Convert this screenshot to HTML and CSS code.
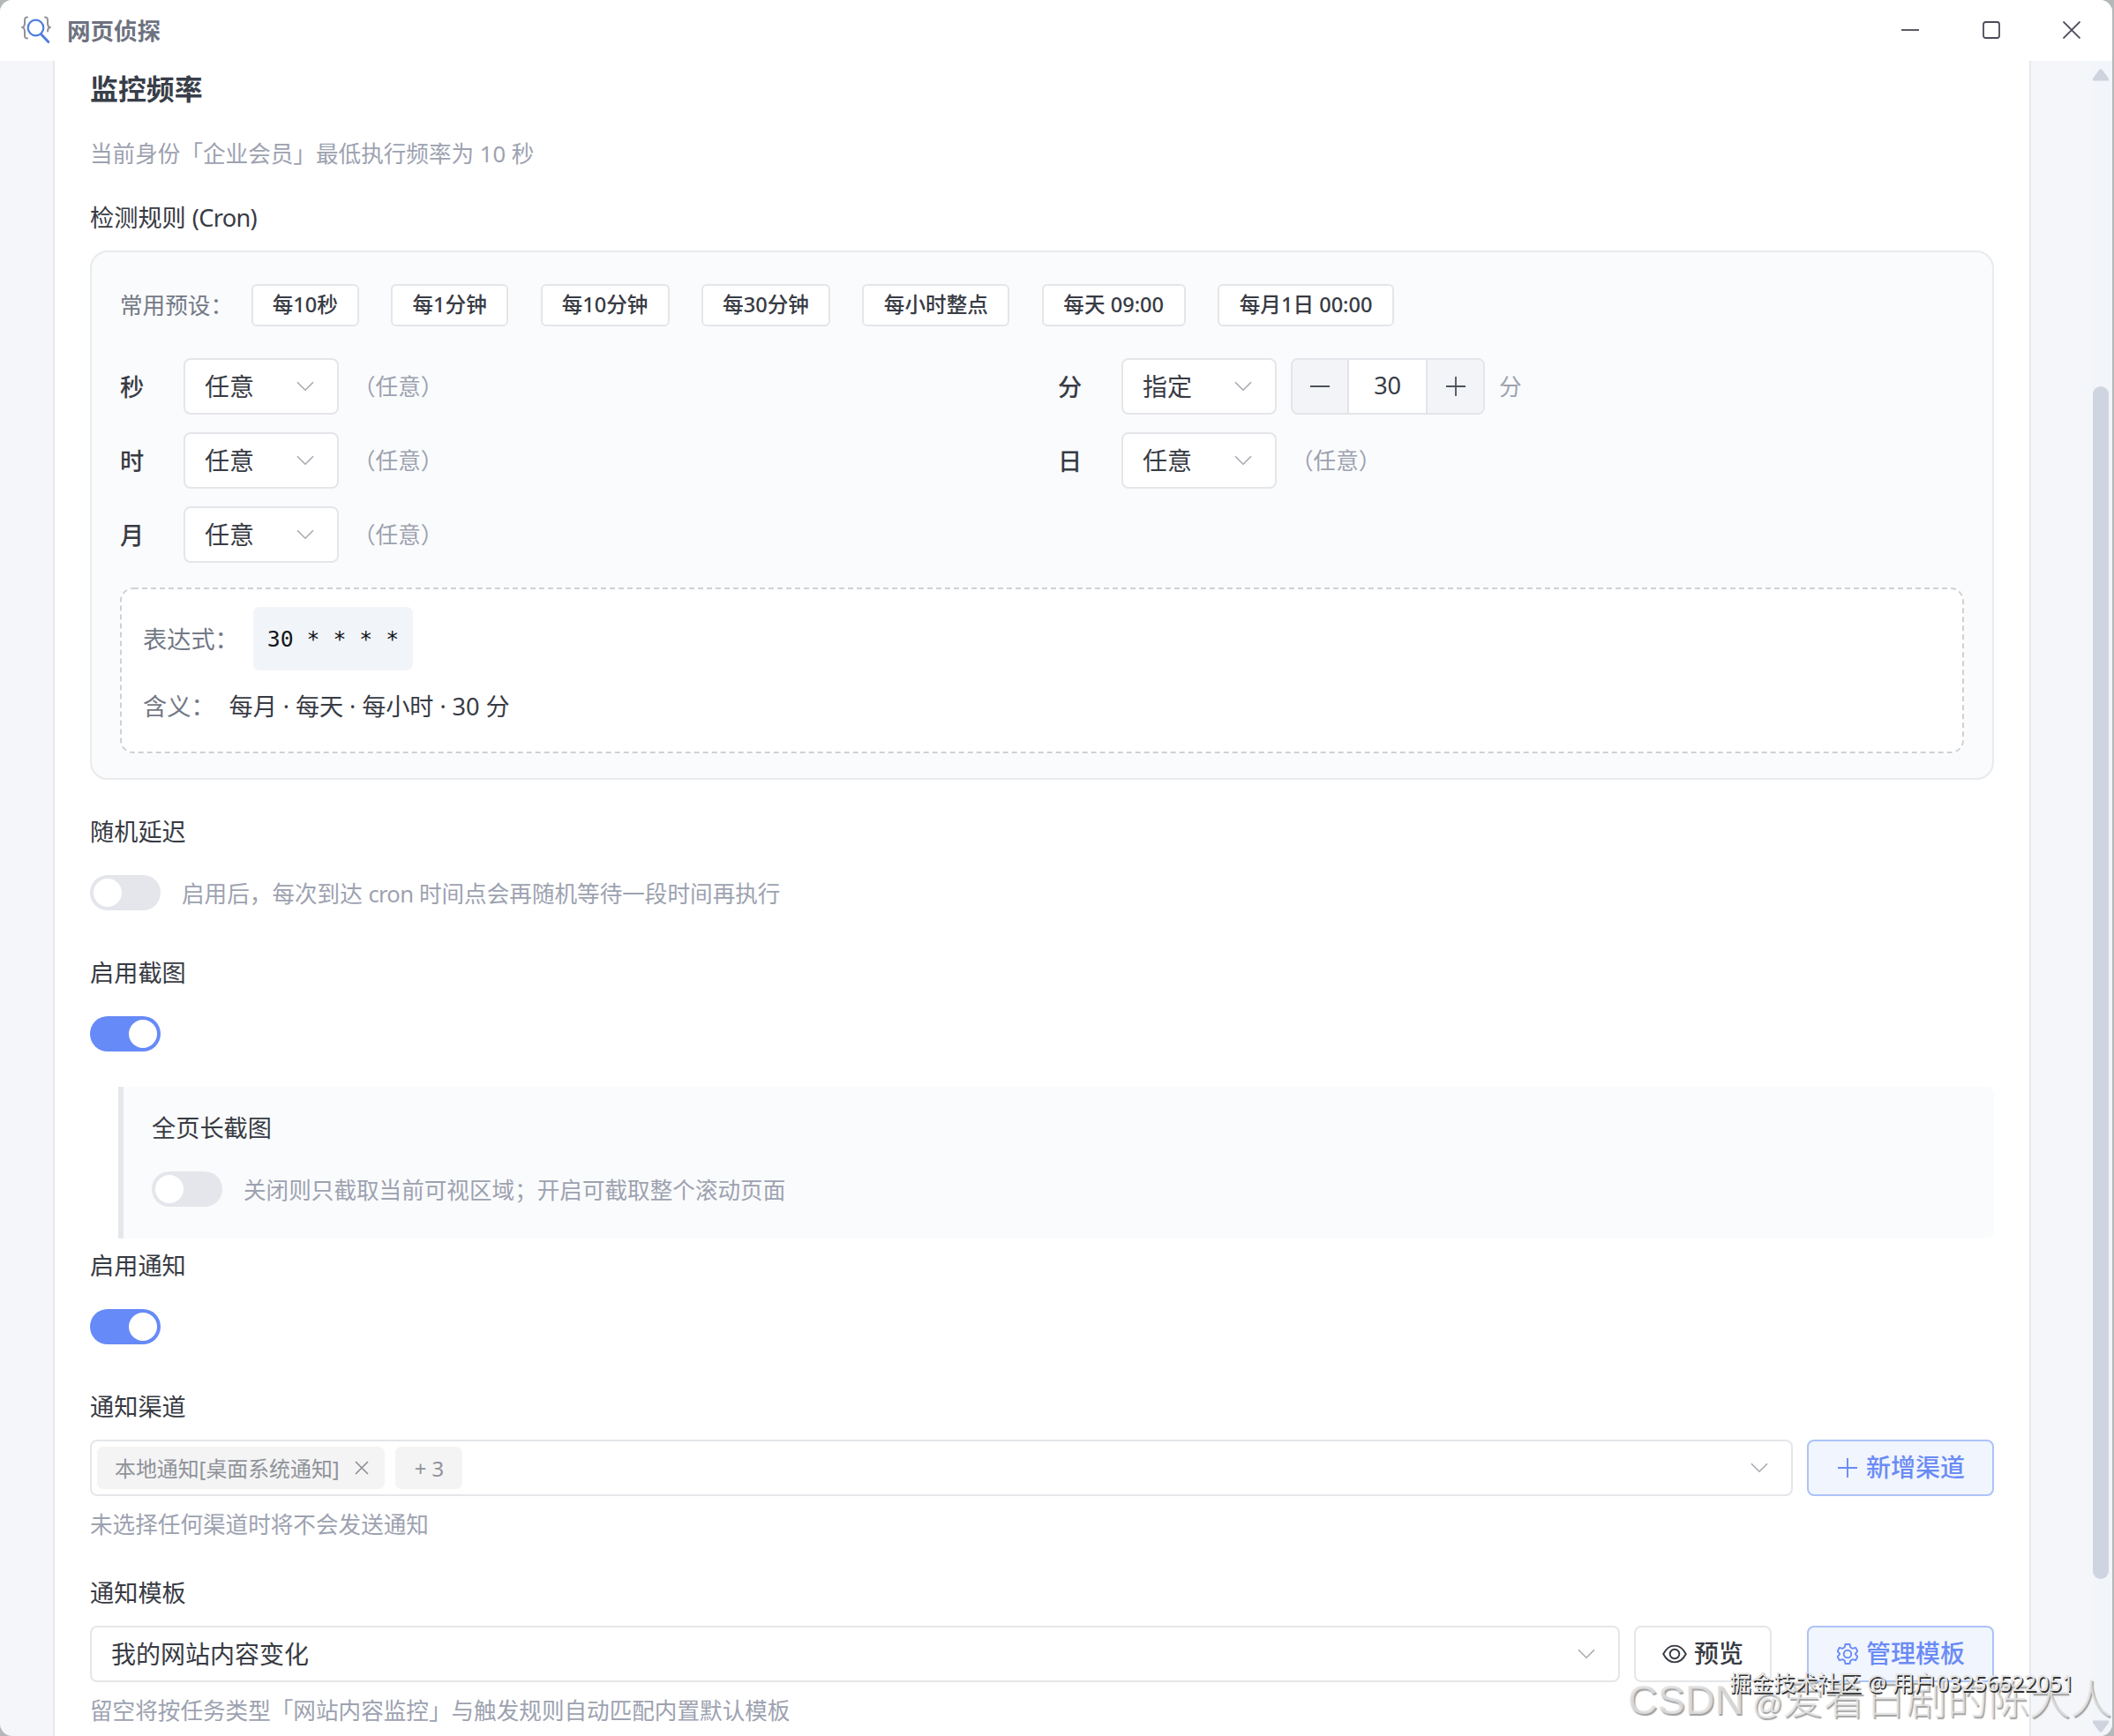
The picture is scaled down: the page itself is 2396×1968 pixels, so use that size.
FILE: index.html
```html
<!DOCTYPE html>
<html lang="zh-CN">
<head>
<meta charset="utf-8">
<title>网页侦探</title>
<link rel="stylesheet" href="styles.css">
</head>
<body>
<svg class="defs" aria-hidden="true">
  <symbol id="chevron" viewBox="0 0 20 12"><path d="M1 1.2 10 10.2 19 1.2"/></symbol>
</svg>
<div class="window">
  <header class="titlebar">
    <svg class="logo" viewBox="0 0 34 32">
      <g fill="none" stroke-linecap="round">
        <path stroke="#909298" stroke-width="2" d="M7 1.500C3.500 1.500 4 4 4 8.500c0 3-1 4-2.500 4.500C3 13.500 4 14.500 4 18c0 5-.5 7.500 3 7.500M27 1.500c3.500 0 3 2.500 3 7 0 3 1 4 2.500 4.500-1.500.5-2.500 1.500-2.500 4.500"/>
        <circle stroke="#4f7fdd" stroke-width="2.2" cx="16.500" cy="13.500" r="8.800"/>
        <path stroke="#4f7fdd" stroke-width="3" d="M22.800 21l8 8.500"/>
      </g>
    </svg>
    <span class="app-name">网页侦探</span>
    <div class="controls">
      <svg viewBox="0 0 20 20"><path d="M0 10h20"/></svg>
      <svg viewBox="0 0 20 20"><rect x="1" y="1" width="18" height="18" rx="2.5"/></svg>
      <svg viewBox="0 0 20 20"><path d="M.5.5l19 19M19.500.5l-19 19"/></svg>
    </div>
  </header>
  <div class="body">
    <main class="card">
      <h2>监控频率</h2>
      <p class="hint intro">当前身份「企业会员」最低执行频率为 10 秒</p>
      <div class="label cron-label">检测规则 <span class="latin">(Cron)</span></div>

      <section class="cron">
        <div class="presets">
          <span class="preset-title">常用预设：</span>
          <button class="w1">每10秒</button>
          <button class="w2">每1分钟</button>
          <button class="w3">每10分钟</button>
          <button class="w3">每30分钟</button>
          <button class="w4">每小时整点</button>
          <button class="w5">每天 09:00</button>
          <button class="w6">每月1日 00:00</button>
        </div>
        <div class="fields">
          <div class="field"><b>秒</b><div class="select">任意<svg class="chev"><use href="#chevron"/></svg></div><span class="any">（任意）</span></div>
          <div class="field"><b>分</b><div class="select">指定<svg class="chev"><use href="#chevron"/></svg></div>
            <div class="number">
              <span class="step minus"><svg viewBox="0 0 22 22"><path d="M0 11h22"/></svg></span>
              <span class="value">30</span>
              <span class="step"><svg viewBox="0 0 22 22"><path d="M0 11h22M11 0v22"/></svg></span>
            </div><span class="unit">分</span></div>
          <div class="field"><b>时</b><div class="select">任意<svg class="chev"><use href="#chevron"/></svg></div><span class="any">（任意）</span></div>
          <div class="field"><b>日</b><div class="select">任意<svg class="chev"><use href="#chevron"/></svg></div><span class="any">（任意）</span></div>
          <div class="field"><b>月</b><div class="select">任意<svg class="chev"><use href="#chevron"/></svg></div><span class="any">（任意）</span></div>
        </div>
        <div class="summary">
          <svg class="dash"><rect x="1" y="1" rx="14"/></svg>
          <div class="line"><span class="key">表达式：</span><code>30 * * * *</code></div>
          <div class="line meaning"><span class="key">含义：</span><span class="latin">每月 · 每天 · 每小时 · 30 分</span></div>
        </div>
      </section>

      <div class="label delay">随机延迟</div>
      <div class="switch-row"><span class="switch"></span><span class="hint">启用后，每次到达 <span class="latin">cron</span> 时间点会再随机等待一段时间再执行</span></div>

      <div class="label shot">启用截图</div>
      <div class="switch-row"><span class="switch on"></span></div>

      <section class="nested">
        <div class="label">全页长截图</div>
        <div class="switch-row"><span class="switch"></span><span class="hint">关闭则只截取当前可视区域；开启可截取整个滚动页面</span></div>
      </section>

      <div class="label notify">启用通知</div>
      <div class="switch-row"><span class="switch on"></span></div>

      <div class="label channel">通知渠道</div>
      <div class="row">
        <div class="select wide tags">
          <span class="tag tag-main">本地通知[桌面系统通知]<svg viewBox="0 0 16 16"><path d="M1 1l14 14M15 1 1 15"/></svg></span>
          <span class="tag tag-more">+ 3</span>
          <svg class="chev"><use href="#chevron"/></svg>
        </div>
        <button class="action primary">
          <svg viewBox="0 0 24 24"><path d="M1 12h22M12 1v22"/></svg>新增渠道
        </button>
      </div>
      <p class="hint below">未选择任何渠道时将不会发送通知</p>

      <div class="label template">通知模板</div>
      <div class="row">
        <div class="select wide">我的网站内容变化<svg class="chev"><use href="#chevron"/></svg></div>
        <button class="action preview">
          <svg class="eye" viewBox="0 0 28 24"><path d="M1.200 12C4 6.500 8.500 2.600 14 2.600S24 6.500 26.800 12C24 17.500 19.500 21.400 14 21.400S4 17.500 1.200 12z"/><circle cx="14" cy="12" r="5.300"/></svg>预览
        </button>
        <button class="action primary">
          <svg viewBox="0 0 24 24"><path stroke-linejoin="round" d="M9.500 1h5l.8 3.500 2.400 1.400 3.400-1.100 2.400 4.200-2.500 2.500v1l2.500 2.500-2.400 4.200-3.400-1.100-2.400 1.400-.8 3.500h-5l-.8-3.500-2.400-1.400-3.400 1.100L.500 15l2.500-2.500v-1L.500 9l2.400-4.200 3.400 1.100 2.400-1.400z"/><circle cx="12" cy="12" r="4.300"/></svg>管理模板
        </button>
      </div>
      <p class="hint below">留空将按任务类型「网站内容监控」与触发规则自动匹配内置默认模板</p>
    </main>
    <div class="scrollbar">
      <svg viewBox="0 0 18 14"><path d="M0 13.500v-2.500L7 1.500q2-2.500 4 0L18 11v2.500z"/></svg>
      <div class="thumb"></div>
      <svg class="down" viewBox="0 0 18 14"><path d="M0 .5v2.500L7 12.500q2 2.500 4 0L18 3V.5z"/></svg>
    </div>
  </div>
</div>
<div class="mark csdn">CSDN <span class="at">@</span>爱看日剧的陈大人</div>
<div class="mark juejin">掘金技术社区 @ 用户03256522051</div>
</body>
</html>
```
FILE: styles.css
```css
* { box-sizing: border-box; }
body {
  margin: 0;
  width: 2396px;
  height: 1968px;
  overflow: hidden;
  position: relative;
  background: #b4b8b9;
  color: #383b44;
  font-family: "Noto Sans", "Noto Sans CJK SC", sans-serif;
  font-size: 27.2px;
  line-height: 40px;
}
.defs { display: none; }
svg { flex: none; }
p, h2 { margin: 0; }
button { font: inherit; color: inherit; padding: 0; margin: 0; background: #fff; }
.latin { letter-spacing: -0.7px; }

.window {
  width: 2394px;
  height: 1968px;
  display: flex;
  flex-direction: column;
  overflow: hidden;
  border-radius: 14px;
  background: #f4f6fa;
}
.titlebar {
  height: 69px;
  flex: none;
  display: flex;
  align-items: center;
  padding: 0 36px 1px 24px;
  background: #fff;
}
.logo { width: 34px; height: 32px; }
.app-name { margin-left: 18px; padding-top: 1px; font-size: 26.5px; font-weight: 600; color: #6d7280; }
.controls { margin-left: auto; display: flex; gap: 71.5px; }
.controls svg { width: 20px; height: 20px; fill: none; stroke: #4a4a58; stroke-width: 1.8; }

.body { flex: 1; min-height: 0; display: flex; justify-content: space-between; padding-left: 60px; }
.card {
  width: 2242px;
  padding: 12px 40px 0 40px;
  background: #fff;
  border: 2px solid #e6e8ec;
  border-width: 0 2px;
}
h2 { font-size: 31.9px; font-weight: 700; line-height: 40px; color: #383e49; }
.hint { font-size: 25.6px; color: #9da2b0; white-space: nowrap; }
.intro { margin-top: 34px; }
.label { line-height: 40px; height: 40px; white-space: nowrap; }
.cron-label { margin-top: 32px; }

.cron {
  margin-top: 17px;
  height: 600px;
  padding: 36px 32px 0;
  border: 2px solid #e8eaec;
  border-radius: 20px;
  background: #fafbfc;
}
.presets { display: flex; align-items: center; gap: 36.4px; height: 48px; }
.preset-title { width: 112.4px; padding-top: 2px; font-size: 25.6px; color: #737986; white-space: nowrap; }
.presets button {
  height: 48px;
  border: 2px solid #e4e6e9;
  border-radius: 6px;
  font-size: 23.6px;
  font-weight: 500;
  line-height: 40px;
  padding-bottom: 2px;
  white-space: nowrap;
}
.w1 { width: 122px; }
.w2 { width: 133px; }
.w3 { width: 146px; }
.w4 { width: 167px; }
.w5 { width: 163px; }
.w6 { width: 200px; }

.fields { display: grid; grid-template-columns: 1fr 1fr; gap: 20px 36px; margin-top: 36px; }
.field { display: flex; align-items: center; height: 64px; }
.field b { width: 72px; padding-top: 1px; font-weight: 500; }
.select {
  width: 176px;
  height: 64px;
  display: flex;
  align-items: center;
  justify-content: space-between;
  padding: 0 26px 0 22px;
  border: 2px solid #e4e6e9;
  border-radius: 8px;
  background: #fff;
  font-size: 28px;
}
.chev { width: 20px; height: 12px; fill: none; stroke: #a6a9b0; stroke-width: 1.6; }
.any { margin-left: 16px; padding-top: 2px; font-size: 25.6px; color: #9da2b0; }
.number {
  width: 220px;
  height: 64px;
  margin-left: 16px;
  display: flex;
  border: 2px solid #e2e5e9;
  border-radius: 8px;
  overflow: hidden;
  background: #fff;
}
.step { width: 63px; display: flex; align-items: center; justify-content: center; background: #f2f4f7; }
.step.minus { width: 62px; }
.step svg { width: 22px; height: 22px; stroke: #4d515a; stroke-width: 1.8; }
.value { flex: 1; text-align: center; line-height: 58px; letter-spacing: -0.3px; border: 2px solid #e2e5e9; border-width: 0 2px; }
.unit { margin-left: 16px; padding-top: 2px; font-size: 25.6px; color: #9da2b0; }

.summary {
  position: relative;
  height: 188px;
  margin-top: 28px;
  padding: 22px 26px 0;
  border-radius: 15px;
  background: #fff;
}
.dash { position: absolute; inset: 0; width: 100%; height: 100%; }
.dash rect { width: calc(100% - 2px); height: calc(100% - 2px); fill: none; stroke: #d0d1d4; stroke-width: 2; stroke-dasharray: 6 4; }
.line { display: flex; align-items: center; gap: 16px; white-space: nowrap; }
.key { color: #737986; padding-top: 2px; }
code {
  height: 72px;
  width: 181px;
  padding-left: 16px;
  border-radius: 7px;
  background: #f1f4f8;
  color: #15171c;
  font: 24.8px/73px "DejaVu Sans Mono", monospace;
}
.meaning { margin-top: 19px; }
.meaning > span { padding-top: 2px; }
.meaning .latin { letter-spacing: -0.1px; }

.switch-row { display: flex; align-items: center; gap: 24px; height: 40px; margin-top: 29px; }
.switch-row .hint { padding-top: 3px; }
.switch { width: 80px; height: 40px; padding: 4px; border-radius: 20px; background: #e4e6eb; display: flex; }
.switch::before { content: ""; width: 32px; height: 32px; border-radius: 50%; background: #fff; }
.switch.on { background: #668af7; justify-content: flex-end; }
.delay { margin-top: 39px; }
.shot { margin-top: 51px; }
.nested {
  height: 172px;
  margin: 40px 0 0 32px;
  padding: 27px 0 0 32px;
  border-left: 6px solid #e5e8eb;
  border-radius: 0 8px 8px 0;
  background: #fafbfc;
}
.notify { margin-top: 11px; }
.channel { margin-top: 51px; }
.row { display: flex; margin-top: 17px; }
.select.wide { flex: 1; }
.select.tags { padding-left: 6px; justify-content: flex-start; }
.wide .chev { margin-left: auto; }
.tag {
  height: 48px;
  display: flex;
  align-items: center;
  padding-top: 1px;
  border-radius: 7px;
  background: #f4f4f5;
  color: #909399;
  font-size: 23.9px;
  white-space: nowrap;
}
.tag-main { width: 326px; padding: 1px 18px 0 20px; justify-content: space-between; }
.tag-main svg { width: 16px; height: 16px; margin-top: -2px; fill: none; stroke: #8b8e94; stroke-width: 1.6; }
.tag-more { width: 76px; margin-left: 12px; padding-left: 1px; justify-content: center; }
.action {
  height: 64px;
  width: 212px;
  margin-left: 16px;
  padding: 0 0 3px 1px;
  display: flex;
  align-items: center;
  justify-content: center;
  gap: 9px;
  border: 2px solid #e4e6e9;
  border-radius: 8px;
  font-size: 28px;
  font-weight: 500;
  white-space: nowrap;
}
.action svg { width: 24px; height: 24px; margin-top: 3px; fill: none; stroke: currentColor; stroke-width: 1.9; }
.action .eye { width: 28px; }
.primary { color: #6a8bf5; border-color: #acc3f8; background: #f1f5fd; }
.preview { width: 156px; padding-left: 0; gap: 8px; }
.preview + .action { margin-left: 40px; }
.below { margin-top: 13px; line-height: 40px; }
.template { margin-top: 37px; }

.scrollbar { width: 22px; padding: 9px 0 4px; display: flex; flex-direction: column; background: #f2f5fa; }
.scrollbar svg { width: 18px; height: 14px; fill: #ced3de; }
.thumb { width: 18px; height: 1352px; margin-top: 346px; border-radius: 9px; background: #ced4e0; }
.scrollbar .down { margin-top: auto; }

.mark { position: absolute; white-space: nowrap; }
.csdn {
  left: 1845px;
  top: 1893px;
  font: 300 46.6px/68px "Liberation Sans", "Noto Sans CJK SC", sans-serif;
  word-spacing: -4px;
  color: rgba(225, 225, 225, .85);
  text-shadow: 1.5px 1.5px 1px rgba(120, 120, 120, .7);
}
.at { font-size: 34px; }
.juejin {
  left: 1960px;
  top: 1887px;
  font-size: 24.9px;
  color: #e4e4e4;
  text-shadow: 1.5px 1.5px 0 #333;
}
```
